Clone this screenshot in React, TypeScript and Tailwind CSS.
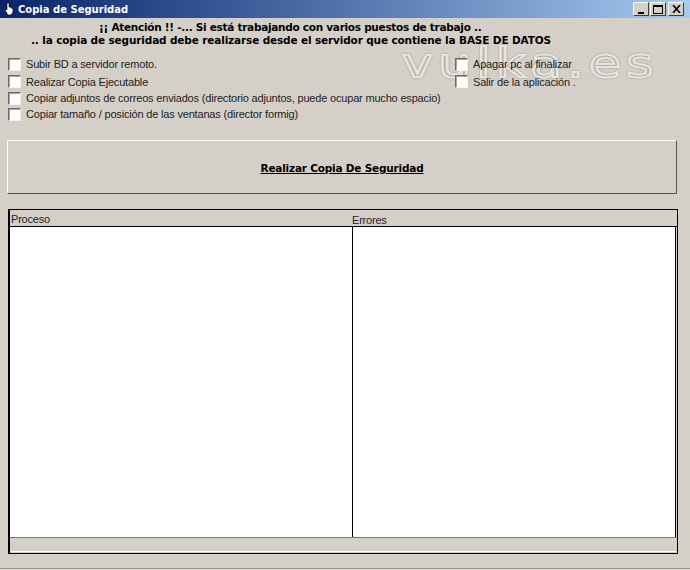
function CheckRow({ label, className = "" }: { label: string; className?: string }) {
  return (
    <label className={`flex items-center gap-[5px] ${className}`}>
      <span className="h-[13px] w-[13px] shrink-0 border border-t-[#6f6c66] border-l-[#6f6c66] border-r-[#f2f0ec] border-b-[#f2f0ec] bg-white shadow-[inset_1px_1px_0_#a8a59e]" />
      <span className="whitespace-nowrap text-[11px] leading-[14px] tracking-[-0.18px] text-[#222]">{label}</span>
    </label>
  );
}

function WinButton({ children }: { children: React.ReactNode }) {
  return (
    <div className="flex h-[14px] w-[16px] items-center justify-center border border-t-white border-l-white border-r-[#404040] border-b-[#404040] bg-[#d4d0c8]">
      {children}
    </div>
  );
}

export default function App() {
  return (
    <div className="relative flex h-[570px] w-[690px] flex-col overflow-hidden bg-[#d4d0c8] font-['Liberation_Sans',sans-serif]">
      {/* watermark */}
      <div className="pointer-events-none absolute left-[402px] top-[33px] origin-left scale-x-[1.3] font-['DejaVu_Sans',sans-serif] text-[40px] leading-[60px] tracking-[4px] text-transparent opacity-80 drop-shadow-[0_0_1px_#8f8c85] [-webkit-text-stroke:2px_#eceae6]">
        vulka.es
      </div>

      {/* title bar */}
      <div className="relative flex h-[18px] items-center justify-between bg-gradient-to-r from-[#0a246a] to-[#a6caf0] pl-[4px] pr-[6px]">
        <div className="flex items-center gap-[3px]">
          <svg width="11" height="14" viewBox="0 0 11 14">
            <path d="M3 1h2v4h1l3 2v3l-2 3H4L1 8l1-1 1 1z" fill="#fff" stroke="#000" strokeWidth="0.6" />
          </svg>
          <span className="font-['DejaVu_Sans',sans-serif] text-[10px] font-bold text-white">Copia de Seguridad</span>
        </div>
        <div className="flex">
          <WinButton>
            <span className="mt-[7px] h-[2px] w-[6px] bg-black" />
          </WinButton>
          <div className="ml-[1px]">
            <WinButton>
              <span className="h-[9px] w-[10px] border border-t-2 border-black" />
            </WinButton>
          </div>
          <div className="ml-[2px]">
            <WinButton>
              <svg width="9" height="8" viewBox="0 0 9 8">
                <path d="M1 0l7 8M8 0L1 8" stroke="#000" strokeWidth="1.6" />
              </svg>
            </WinButton>
          </div>
        </div>
      </div>

      {/* warning */}
      <div className="relative mt-[3px] pl-[31px] font-['DejaVu_Sans',sans-serif] text-[10.5px] font-bold leading-[13px] text-black">
        <p className="pl-[68px] tracking-[-0.28px]">¡¡ Atención !! -... Si está trabajando con varios puestos de trabajo ..</p>
        <p className="tracking-[-0.14px]">.. la copia de seguridad debe realizarse desde el servidor que contiene la BASE DE DATOS</p>
      </div>

      {/* options */}
      <div className="relative mt-[8px] flex justify-between pl-[8px] pr-[117px]">
        <div className="flex flex-col">
          <CheckRow label="Subir BD a servidor remoto." className="h-[18px]" />
          <CheckRow label="Realizar Copia Ejecutable" className="h-[17px]" />
          <CheckRow label="Copiar adjuntos de correos enviados (directorio adjuntos, puede ocupar mucho espacio)" className="h-[16px]" />
          <CheckRow label="Copiar tamaño / posición de las ventanas (director formig)" className="h-[16px]" />
        </div>
        <div className="flex w-[118px] flex-col">
          <CheckRow label="Apagar pc al finalizar" className="h-[18px]" />
          <CheckRow label="Salir de la aplicación ." className="h-[17px]" />
        </div>
      </div>

      {/* main action */}
      <button className="relative ml-[7px] mt-[18px] flex h-[54px] w-[670px] items-center justify-center border border-t-white border-l-white border-r-[#555] border-b-[#555] bg-[#d4d0c8] pt-[3px] font-['DejaVu_Sans',sans-serif] text-[10.5px] font-bold tracking-[-0.2px] text-black underline">
        Realizar Copia De Seguridad
      </button>

      {/* log panes */}
      <div className="ml-[8px] mt-[15px] flex h-[345px] w-[670px] flex-col border border-l-2 border-black">
        <div className="flex h-[16px] text-[11px] leading-[18px] tracking-[-0.2px] text-[#222]">
          <div className="w-[342px] pl-[1px]">Proceso</div>
          <div className="pt-[1px]">Errores</div>
        </div>
        <div className="flex h-[312px] border-y border-y-black border-b-[#777] pr-[1px]">
          <div className="w-[342px] bg-white" />
          <div className="flex-1 border-x border-black bg-white" />
        </div>
        <div className="mx-[1px] mb-[1px] flex-1 border-b border-b-white" />
      </div>

      <div className="mt-auto mb-[1px] h-px bg-[#9a978f]" />
    </div>
  );
}
